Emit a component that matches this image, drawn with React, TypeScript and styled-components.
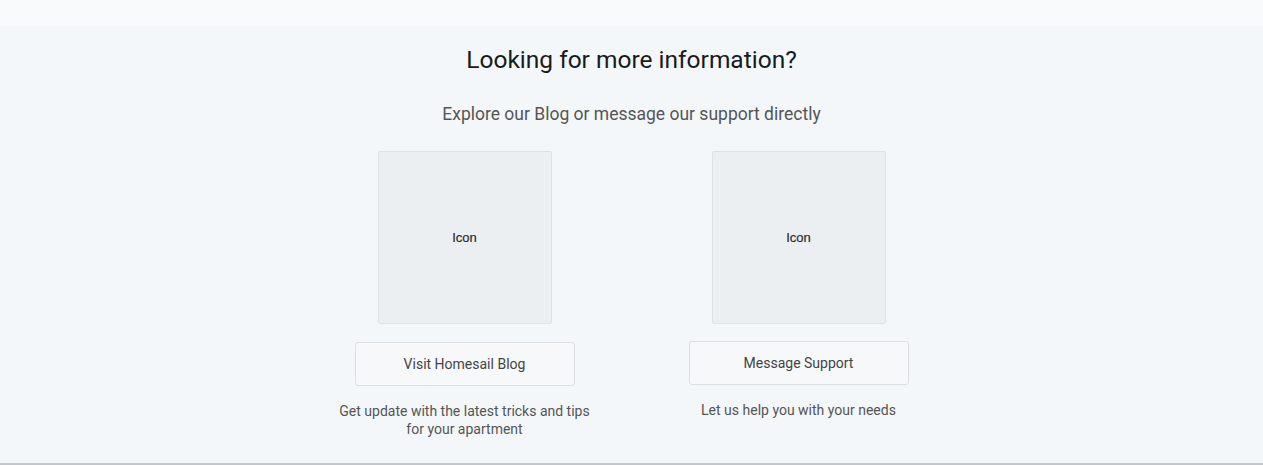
import React from "react";
import styled, { createGlobalStyle } from "styled-components";

const GlobalStyle = createGlobalStyle`
  body {
    margin: 0;
    font-family: Roboto, "Liberation Sans", sans-serif;
    background: #f9fafb;
  }
`;

const TopBand = styled.div`
  height: 26px;
  background: #f9fafb;
`;

const Section = styled.section`
  background: #f3f7fa;
  height: 437px;
  border-bottom: 2px solid #c3c7cb;
  display: flex;
  flex-direction: column;
  align-items: center;
`;

const Title = styled.h2`
  margin: 20px 0 0;
  font-size: 24.5px;
  font-weight: 400;
  line-height: 28px;
  color: #1a1a1a;
`;

const Subtitle = styled.p`
  margin: 29px 0 0;
  font-size: 17.5px;
  line-height: 22px;
  color: #555;
`;

const Options = styled.div`
  margin-top: 26px;
  display: flex;
  gap: 73px;
`;

const Option = styled.div`
  width: 261px;
  display: flex;
  flex-direction: column;
  align-items: center;
`;

const IconBox = styled.div`
  width: 172px;
  height: 171px;
  background: #eceff2;
  border: 1px solid #dfe2e5;
  border-radius: 2px;
  display: flex;
  align-items: center;
  justify-content: center;
  font-family: "Liberation Sans", Arial, sans-serif;
  font-size: 13px;
  color: #2a2a2a;
  -webkit-text-stroke: 0.2px #2a2a2a;
`;

const Button = styled.button<{ $offset?: number }>`
  margin-top: ${(p) => 17 + (p.$offset ?? 0)}px;
  width: 220px;
  height: 44px;
  background: #f7f8fa;
  border: 1px solid #dcdfe2;
  border-radius: 3px;
  font-family: Roboto, "Liberation Sans", sans-serif;
  font-size: 14px;
  color: #444;
  cursor: pointer;
`;

const Description = styled.p`
  margin: 16px 0 0;
  font-size: 14px;
  line-height: 18px;
  color: #555;
  text-align: center;
`;

const options = [
  {
    label: "Visit Homesail Blog",
    text: "Get update with the latest tricks and tips for your apartment",
    offset: 1,
  },
  {
    label: "Message Support",
    text: "Let us help you with your needs",
    offset: 0,
  },
];

export default function App() {
  return (
    <>
      <GlobalStyle />
      <TopBand />
      <Section>
        <Title>Looking for more information?</Title>
        <Subtitle>Explore our Blog or message our support directly</Subtitle>
        <Options>
          {options.map((option) => (
            <Option key={option.label}>
              <IconBox>Icon</IconBox>
              <Button $offset={option.offset}>{option.label}</Button>
              <Description>{option.text}</Description>
            </Option>
          ))}
        </Options>
      </Section>
    </>
  );
}
